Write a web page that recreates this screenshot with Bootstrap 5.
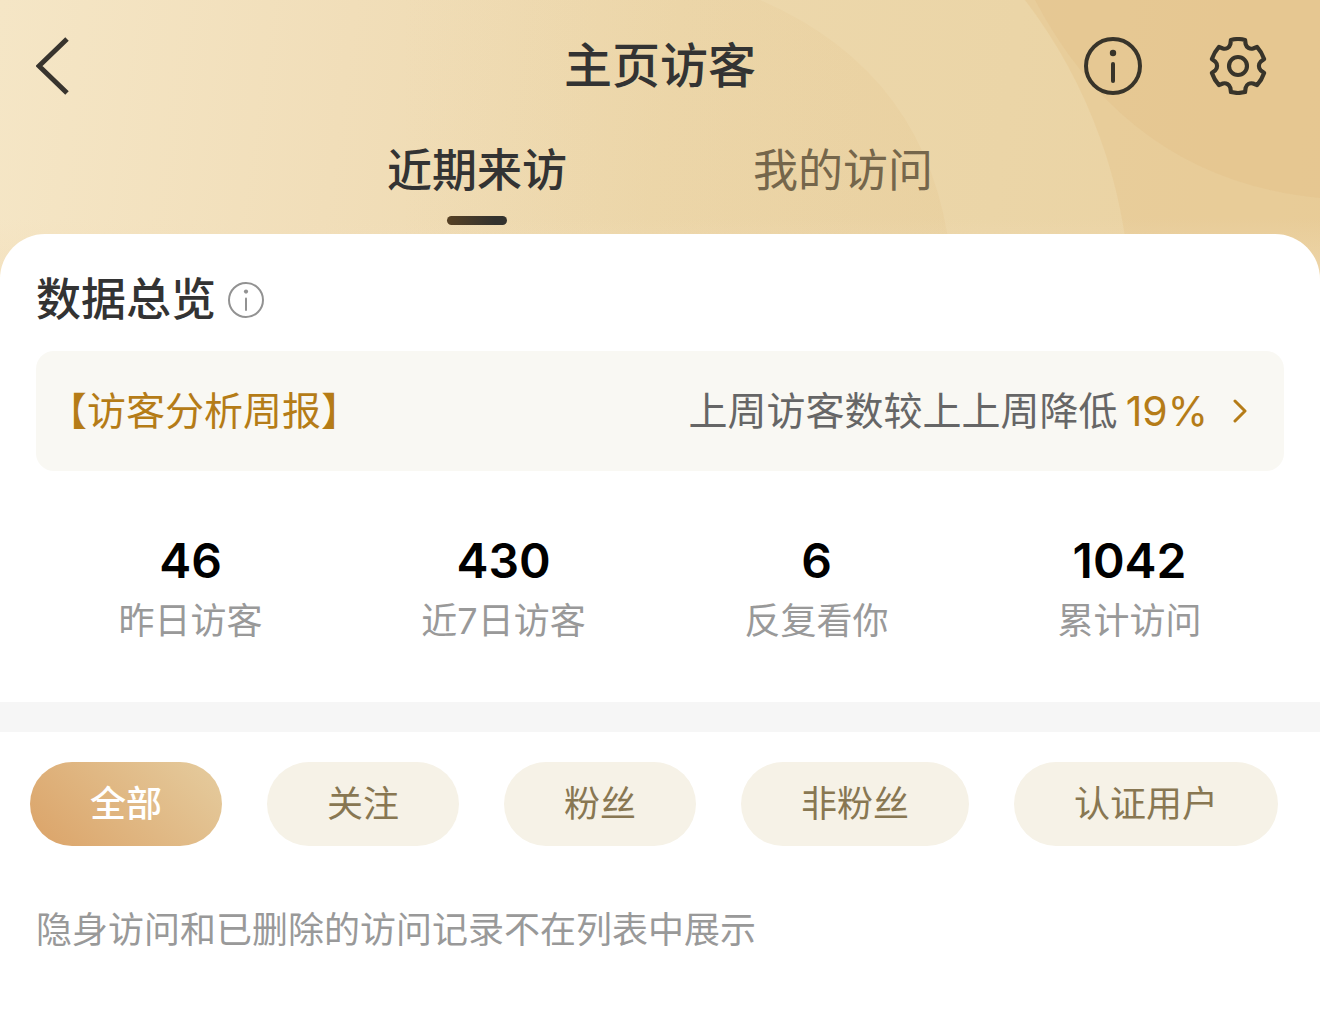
<!DOCTYPE html>
<html lang="zh-CN">
<head>
<meta charset="utf-8">
<meta name="viewport" content="width=device-width, initial-scale=1">
<title>主页访客</title>
<link href="https://cdn.jsdelivr.net/npm/bootstrap@5.3.0/dist/css/bootstrap.min.css" rel="stylesheet">
<style>
  body { font-family: Inter, "Noto Sans CJK SC", sans-serif; background: #fff; color: #333; }
  button { color: inherit; }
  .hero { background: linear-gradient(98deg, #f5e6c6 0%, #f1deb9 25%, #edd8ac 48%, #ebd5a7 72%, #ead1a0 100%); }
  .hero-art { height: 290px; }
  .top-bar { height: 132px; grid-template-columns: 1fr auto 1fr; }
  .top-back { padding-left: 36px; }
  .top-actions { gap: 67px; padding-right: 53px; }
  .page-title { font-size: 48px; line-height: 60px; font-weight: 500; }
  .view-tabs { gap: 186px; padding: 9px 0; }
  .view-tab { font-size: 45px; line-height: 60px; color: #75664b; text-decoration: none; }
  .view-tab.active { font-weight: 500; color: #333; }
  .view-tab::after { content: ""; width: 60px; height: 9px; margin-top: 15px; border-radius: 5px; }
  .view-tab.active::after { background: linear-gradient(90deg, #574124, #33322e 80%); }
  .sheet { border-radius: 45px 45px 0 0; padding-top: 36px; }
  .gutter { padding-left: 36px; padding-right: 36px; }
  .section-title { font-size: 45px; line-height: 60px; font-weight: 500; }
  .info-btn { margin-left: 12px; color: #999; }
  .report { margin-top: 21px; padding: 30px 36px 30px 12px; border-radius: 18px; background: #f9f8f3; font-size: 39px; line-height: 60px; color: #666; text-decoration: none; }
  .gold { color: #b57c17; }
  .rate { font-size: 41px; margin-left: 8px; }
  .report svg { margin-left: 24px; }
  .stats { padding: 60px 34px 54px; }
  .stat-num { font-size: 48px; line-height: 60px; font-weight: 600; color: #000; margin-bottom: 3px; }
  .stat-label, .hint { font-size: 36px; line-height: 54px; color: #999; }
  .band { height: 30px; background: #f6f6f6; }
  .filters { padding: 30px 30px 0; gap: 45px; }
  .chip { border: 0; border-radius: 42px; padding: 15px 60px; font-size: 36px; line-height: 54px; background: #f6f2e7; color: #887752; }
  .chip.active { background: linear-gradient(45deg, #dba368, #e4c899 90%); color: #fff; font-weight: 500; }
  .hint { padding-top: 57px; padding-bottom: 54px; }
</style>
</head>
<body>
<div class="hero position-relative">
  <svg class="hero-art position-absolute top-0 start-0 w-100" viewBox="0 0 1320 290" preserveAspectRatio="none" aria-hidden="true">
    <defs>
      <linearGradient id="ringA" x1="0" x2="1"><stop offset="0" stop-color="#e4c48d" stop-opacity="0"/><stop offset="1" stop-color="#e4c48d" stop-opacity=".25"/></linearGradient>
      <linearGradient id="fade" x1="0" x2="0" y1="0" y2="1"><stop offset=".75" stop-color="#f3dfbb" stop-opacity="0"/><stop offset="1" stop-color="#f3dfbb" stop-opacity=".6"/></linearGradient>
    </defs>
    <path d="M400 0H760Q945 80 953 290H400Z" fill="url(#ringA)"/>
    <path d="M1025 0A514 514 0 0 1 1130 290H1320V0Z" fill="#e4c48a" fill-opacity=".42"/>
    <path d="M1035 0Q1130 180 1320 198V0Z" fill="#dfba7e" fill-opacity=".26"/>
    <path d="M0 0H1320V290H0Z" fill="url(#fade)"/>
  </svg>
  <header class="position-relative">
    <div class="top-bar d-grid align-items-center">
      <div class="top-back d-flex">
        <button type="button" class="btn p-0 border-0 d-flex" aria-label="返回">
          <svg width="34" height="58" viewBox="0 0 34 58" fill="none" stroke="#38342e" stroke-width="5"><path d="M31 2 3 29 31 56"/></svg>
        </button>
      </div>
      <h1 class="page-title m-0">主页访客</h1>
      <div class="top-actions d-flex justify-content-end">
        <button type="button" class="btn p-0 border-0 d-flex" aria-label="说明">
          <svg width="58" height="58" viewBox="0 0 58 58" fill="none" stroke="#38342a" stroke-width="4"><circle cx="29" cy="29" r="27"/><path d="M29 27V44" stroke-linecap="round"/><circle cx="29" cy="16" r="3.2" fill="#38342a" stroke="none"/></svg>
        </button>
        <button type="button" class="btn p-0 border-0 d-flex" aria-label="设置">
          <svg width="58" height="58" viewBox="-30 -30 60 60" fill="none" stroke="#38342a" stroke-width="4.3" stroke-linejoin="round"><circle r="9.3"/><path d="M27-7.2L23.5-4.5C21-2 21 2 23.5 4.5L27 7.2Q24.5 14.5 19.7 19.8L15.6 18.1C12.2 17.2 8.800 19.2 7.9 22.6L7.3 27Q0 28.8-7.3 27L-7.9 22.6C-8.8 19.2-12.2 17.2-15.6 18.1L-19.7 19.8Q-24.5 14.5-27 7.2L-23.5 4.5C-21 2-21-2-23.5-4.5L-27-7.2Q-24.5-14.5-19.7-19.8L-15.6-18.1C-12.2-17.2-8.8-19.2-7.9-22.6L-7.3-27Q0-28.8 7.3-27L7.9-22.6C8.8-19.2 12.2-17.2 15.6-18.1L19.7-19.8Q24.5-14.5 27-7.2Z"/></svg>
        </button>
      </div>
    </div>
    <nav class="view-tabs d-flex justify-content-center" aria-label="访问类型">
      <a href="#recent" class="view-tab active d-flex flex-column align-items-center" aria-current="page">近期来访</a>
      <a href="#mine" class="view-tab d-flex flex-column align-items-center">我的访问</a>
    </nav>
  </header>

  <section class="sheet bg-white position-relative" id="recent">
    <div class="gutter">
      <div class="d-flex align-items-center">
        <h2 class="section-title m-0">数据总览</h2>
        <button type="button" class="info-btn btn p-0 border-0 d-flex" aria-label="数据说明">
          <svg width="36" height="36" viewBox="0 0 36 36" fill="none" stroke="#929292" stroke-width="2"><circle cx="18" cy="18" r="17"/><path d="M18 16.5V28" stroke-linecap="round"/><circle cx="18" cy="9.6" r="2.1" fill="#929292" stroke="none"/></svg>
        </button>
      </div>
      <a href="#report" class="report d-flex align-items-center justify-content-between">
        <span class="gold">【访客分析周报】</span>
        <span class="d-flex align-items-center">上周访客数较上上周降低<span class="rate gold">19%</span>
          <svg width="16" height="24" viewBox="0 0 16 24" fill="none" stroke="#b57c17" stroke-width="3" stroke-linecap="round" stroke-linejoin="round"><path d="M3 2 13 12 3 22"/></svg>
        </span>
      </a>
    </div>
    <div class="stats">
      <div class="row g-0 text-center">
        <div class="col-3"><div class="stat-num">46</div><div class="stat-label">昨日访客</div></div>
        <div class="col-3"><div class="stat-num">430</div><div class="stat-label">近7日访客</div></div>
        <div class="col-3"><div class="stat-num">6</div><div class="stat-label">反复看你</div></div>
        <div class="col-3"><div class="stat-num">1042</div><div class="stat-label">累计访问</div></div>
      </div>
    </div>
  </section>
</div>
<div class="band"></div>
<main>
  <div class="filters d-flex flex-wrap">
    <button type="button" class="chip active" aria-pressed="true">全部</button>
    <button type="button" class="chip" aria-pressed="false">关注</button>
    <button type="button" class="chip" aria-pressed="false">粉丝</button>
    <button type="button" class="chip" aria-pressed="false">非粉丝</button>
    <button type="button" class="chip" aria-pressed="false">认证用户</button>
  </div>
  <p class="hint gutter m-0">隐身访问和已删除的访问记录不在列表中展示</p>
</main>
<script src="https://cdn.jsdelivr.net/npm/bootstrap@5.3.0/dist/js/bootstrap.bundle.min.js"></script>
</body>
</html>
